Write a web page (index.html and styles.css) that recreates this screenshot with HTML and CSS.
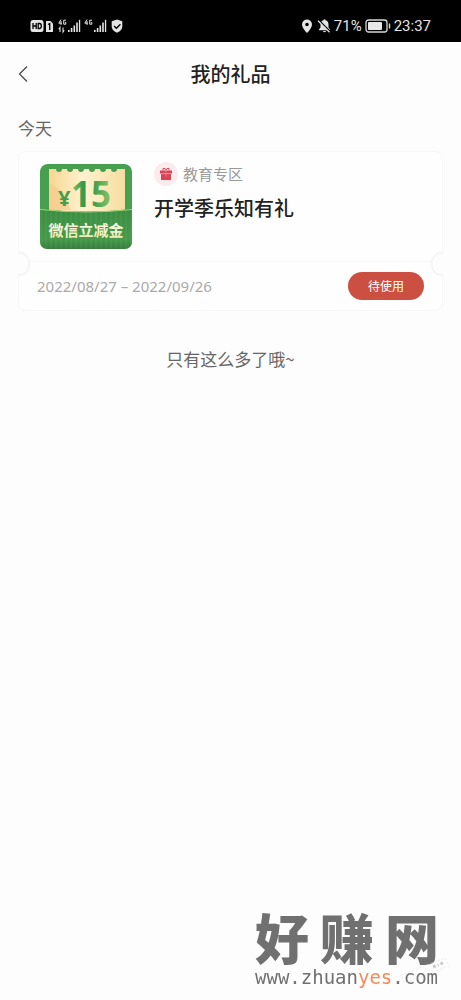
FILE: index.html
```html
<!DOCTYPE html>
<html lang="zh-CN">
<head>
<meta charset="utf-8">
<meta name="viewport" content="width=device-width, initial-scale=1">
<title>我的礼品</title>
<link rel="stylesheet" href="styles.css">
</head>
<body>
<div class="status">
  <div class="status-group">
    <svg width="96" height="18" viewBox="0 0 96 18" fill="#e4e4e4" aria-hidden="true">
      <rect x="0.5" y="3" width="13" height="12" rx="2.5"/>
      <path d="M3 6v6M6.200 6v6M3 9h3.200M8.200 6.500v5h1.300q1.800 0 1.800-2.500t-1.800-2.500z" fill="none" stroke="#000" stroke-width="1.300"/>
      <path d="M16 4h4.500l2.500 2.500V15h-7z"/>
      <path d="M18 7.500l1.700-.9V13" fill="none" stroke="#000" stroke-width="1.400"/>
      <g id="net">
        <path d="M31 2.500l-2.200 3.700h3M31 4v4M36 3.200h-2.300v4h2.100V5.400h-1" fill="none" stroke="#e4e4e4" stroke-width="1"/>
        <path d="M38 13h1.600v2H38zM40.800 11h1.600v4h-1.600zM43.500 8.500h1.600V15h-1.600zM46.200 5.500h1.600V15h-1.600zM48.900 2.800h1.300V15h-1.300z"/>
      </g>
      <use href="#net" x="26"/>
      <path d="M30 15v-4.500l-1.200 1.700M33 10.500V15l1.200-1.700" fill="none" stroke="#e4e4e4" stroke-width="1.100"/>
      <path d="M87 2.500l5.300 1.800v5q0 4-5.300 6.500-5.300-2.500-5.300-6.500v-5z"/>
      <path d="M84 9l2.400 2.300 4-4" fill="none" stroke="#000" stroke-width="1.300"/>
    </svg>
  </div>
  <div class="status-group">
    <svg width="30" height="18" viewBox="0 0 30 18" fill="#e4e4e4" aria-hidden="true">
      <path fill-rule="evenodd" d="M6 2.500a5 5 0 0 1 5 5q0 3.500-5 8.500-5-5-5-8.500a5 5 0 0 1 5-5zm0 3.200a1.800 1.800 0 1 0 0 3.600 1.800 1.800 0 0 0 0-3.600z"/>
      <path d="M18 12.500l1.500-2V7.500q0-3.500 3-4.200a1 1 0 0 1 2 0q3 .7 3 4.200v3l1.500 2v.8H18zM21.800 14h3.400q-1.700 2.600-3.400 0z"/>
      <path d="M17.500 3.200l11.500 11.500" stroke="#000" stroke-width="2"/>
      <path d="M17 3.800l11.500 11.500" stroke="#e4e4e4" stroke-width="1.300"/>
    </svg>
    <span>71%</span>
    <svg width="26" height="16" viewBox="0 0 26 16" aria-hidden="true">
      <rect x="1" y="2" width="21" height="12" rx="2.500" fill="none" stroke="#d8d8d8" stroke-width="1.300"/>
      <rect x="3" y="4" width="14" height="8" rx="1" fill="#e8e8e8"/>
      <path d="M24.500 5.500v5" stroke="#d8d8d8" stroke-width="1.400"/>
    </svg>
    <span class="clock">23:37</span>
  </div>
</div>

<header class="nav">
  <button class="back" aria-label="返回">
    <svg width="10" height="18" viewBox="0 0 10 18" fill="none" stroke="#444" stroke-width="1.200" aria-hidden="true"><path d="M9 1.500L1.500 9 9 16.500"/></svg>
  </button>
  <h1>我的礼品</h1>
</header>

<main>
  <h2 class="day">今天</h2>
  <article class="card">
    <div class="card-main">
      <svg class="coupon" width="92" height="85" viewBox="0 0 92 85" role="img" aria-label="¥15 微信立减金">
        <defs>
          <linearGradient id="paper"><stop offset="0" stop-color="#f8d592"/><stop offset=".45" stop-color="#fff3cf"/><stop offset="1" stop-color="#f5dda0"/></linearGradient>
          <linearGradient id="pocket" x2="0" y2="1"><stop offset="0" stop-color="#3b8d43"/><stop offset=".75" stop-color="#479a4c"/><stop offset="1" stop-color="#397c3b"/></linearGradient>
          <linearGradient id="digits" x2="1" y2="0"><stop offset="0" stop-color="#8cc760"/><stop offset=".3" stop-color="#39994b"/><stop offset=".6" stop-color="#45a050"/><stop offset="1" stop-color="#8cc566"/></linearGradient>
          <linearGradient id="label" x2="0" y2="1"><stop offset="0" stop-color="#ffffff"/><stop offset="1" stop-color="#eee9a5"/></linearGradient>
          <pattern id="ribs" width="5" height="8" patternUnits="userSpaceOnUse"><path d="M1 0v8" stroke="#62ad62" stroke-width="1" opacity=".35"/></pattern>
        </defs>
        <rect width="92" height="85" rx="8" fill="#479f50"/>
        <path d="M79 6h5v42h-5z" fill="#286d32"/>
        <path d="M9 5h7a3 3 0 0 0 6 0h5a3 3 0 0 0 6 0h5a3 3 0 0 0 6 0h5a3 3 0 0 0 6 0h5a3 3 0 0 0 6 0h5a3 3 0 0 0 6 0h8v43H9z" fill="url(#paper)"/>
        <path d="M9 19q12 4 22 27H9z" fill="#f5c98b" opacity=".6"/>
        <text class="yen" x="18" y="42" fill="#439f4c">¥</text>
        <text class="amount" x="31" y="43" fill="url(#digits)">15</text>
        <path d="M0 45q46 5 92 0v32q0 8-8 8H8q-8 0-8-8z" fill="url(#pocket)"/>
        <path d="M0 45q46 5 92 0v32q0 8-8 8H8q-8 0-8-8z" fill="url(#ribs)"/>
        <path d="M0 45.500q46 5 92 0" fill="none" stroke="#a5cf75"/>
        <text class="coupon-label" x="46" y="72" text-anchor="middle" fill="url(#label)">微信立减金</text>
      </svg>
      <div class="info">
        <div class="zone">
          <svg width="24" height="24" viewBox="0 0 24 24" aria-hidden="true">
            <circle cx="12" cy="12" r="12" fill="#fcebed"/>
            <path d="M6 8.500h12v3H6zM7 12h10v6H7z" fill="#dc4355"/>
            <path d="M12 8.500V15M6 11.700h12" stroke="#f08c97" stroke-width=".7"/>
            <path d="M9 8.500V6.500h2l1 1.500 1-1.500h2v2" fill="none" stroke="#dc4355" stroke-width="1"/>
          </svg>
          <span>教育专区</span>
        </div>
        <h3>开学季乐知有礼</h3>
      </div>
    </div>
    <div class="card-foot">
      <span class="dates">2022/08/27 – 2022/09/26</span>
      <button class="use">待使用</button>
    </div>
  </article>
  <p class="end">只有这么多了哦~</p>
</main>

<div class="watermark">
  <div class="mark-name"><span>好</span><span>赚</span><span>网</span></div>
  <div class="mark-url">www.zhuan<b>yes</b>.com</div>
</div>
<svg class="stamp" width="54" height="32" viewBox="0 0 54 32" fill="none" stroke="#aaa" aria-hidden="true">
  <path d="M2 21L46 4l4 8L6 29z" stroke="#ddd" stroke-dasharray="2 2"/>
  <path d="M34 13l12-5" stroke-width="3" stroke-dasharray="3 2 1 2"/>
</svg>
</body>
</html>
```
FILE: styles.css
```css
* { box-sizing: border-box; }
body {
  margin: 0;
  min-height: 100vh;
  background: #fdfdfd;
  color: #222;
  font-family: "Noto Sans", "Noto Sans CJK SC", sans-serif;
}
h1, h2, h3, p { margin: 0; }
button { border: 0; padding: 0; font: inherit; cursor: pointer; }
svg { display: block; flex: none; }

.status {
  display: flex;
  align-items: center;
  justify-content: space-between;
  height: 42px;
  padding: 9px 30px 0;
  background: #000;
  color: #e4e4e4;
  font: 15px/18px Roboto, sans-serif;
}
.status-group { display: flex; align-items: center; gap: 3px; }

.nav {
  display: grid;
  grid-template-columns: 28px 1fr 28px;
  align-items: center;
  height: 64px;
  padding: 0 18px;
}
.back { display: flex; background: none; }
.nav h1 {
  font: 500 20px/28px "Noto Sans CJK SC", sans-serif;
  text-align: center;
}

main { padding: 8px 18px; }
.day {
  color: #666;
  font: 400 17px/28px "Noto Sans CJK SC", sans-serif;
}
.card {
  position: relative;
  margin-top: 9px;
  border: 1px solid #f8f8f8;
  border-radius: 8px;
  background: #fefefe;
}
.card-main {
  display: flex;
  gap: 22px;
  height: 110px;
  padding: 12px 21px;
  border-bottom: 1px solid #f6f6f6;
}
.yen { font: 700 22px "Noto Sans", sans-serif; }
.amount { font: 700 35px "Noto Sans", sans-serif; }
.coupon-label { font: 700 15px "Noto Sans CJK SC", sans-serif; }
.info { display: flex; flex-direction: column; gap: 8px; }
.zone {
  display: flex;
  align-items: center;
  gap: 5px;
  height: 24px;
  margin-top: -2px;
  color: #999;
  font: 15px/24px "Noto Sans CJK SC", sans-serif;
}
.info h3 {
  font: 500 20px/28px "Noto Sans CJK SC", sans-serif;
}
.card-foot {
  display: flex;
  align-items: center;
  justify-content: space-between;
  height: 48px;
  padding: 0 18px;
}
.dates { color: #aaa; font-size: 15px; }
.use {
  width: 76px;
  height: 28px;
  border-radius: 14px;
  background: #cc5041;
  color: #fff;
  font: 12px/28px "Noto Sans CJK SC", sans-serif;
}
.card::before, .card::after {
  content: "";
  position: absolute;
  top: 100px;
  width: 10px;
  height: 20px;
  border: 2px solid #f5f5f5;
  background: #fdfdfd;
}
.card::before { left: -1px; border-left: 0; border-radius: 0 10px 10px 0; }
.card::after { right: -1px; border-right: 0; border-radius: 10px 0 0 10px; }
.end {
  margin-top: 34px;
  color: #666;
  font: 17px/28px "Noto Sans CJK SC", sans-serif;
  text-align: center;
}

.watermark {
  position: fixed;
  right: 22px;
  bottom: 13px;
  width: 184px;
  color: #707070;
}
.mark-name {
  display: flex;
  justify-content: space-between;
  font: 900 54px/60px "Noto Sans CJK SC", sans-serif;
}
.mark-url { font: 19px/20px "DejaVu Sans Mono", monospace; }
.mark-url b { color: #f58a5c; font-weight: 400; }
.stamp { position: fixed; right: 8px; bottom: 14px; opacity: .6; }
```
